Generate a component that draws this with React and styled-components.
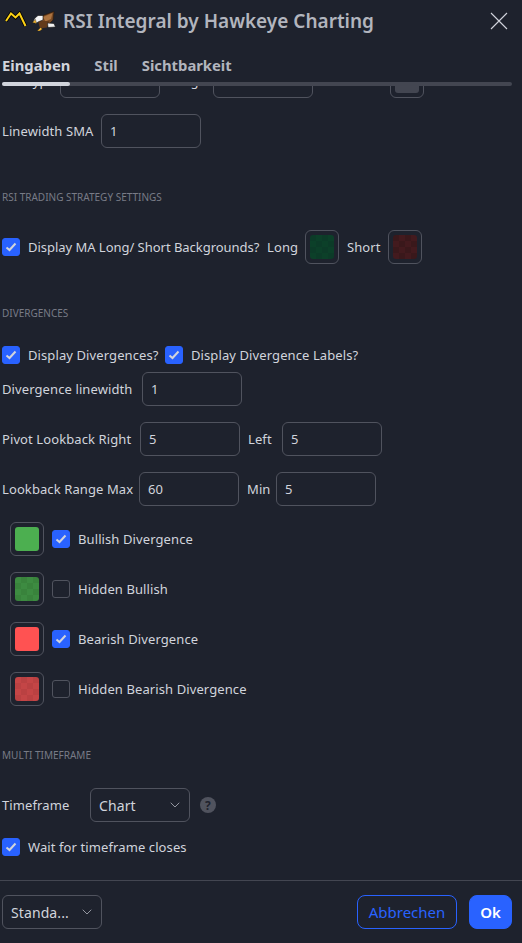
import React from 'react'
import styled, { createGlobalStyle } from 'styled-components'
import { ChevronDown } from 'lucide-react'

const GlobalStyle = createGlobalStyle`
  html, body {
    margin: 0;
    background: #1e222d;
  }
  * {
    box-sizing: border-box;
  }
`

const Dialog = styled.div`
  width: 522px;
  height: 943px;
  display: flex;
  flex-direction: column;
  background: #1e222d;
  color: #d1d4dc;
  font-family: 'Noto Sans', sans-serif;
  font-size: 13px;
  letter-spacing: 0.1px;
  overflow: hidden;
`

const Header = styled.header`
  height: 41px;
  flex: none;
  display: flex;
  align-items: center;
  padding: 0 14px 0 5px;
  gap: 5px;
`

const Title = styled.h1`
  margin: 0 0 0 2px;
  flex: 1;
  font-size: 19px;
  font-weight: 600;
  letter-spacing: 0;
  color: #b2b5be;
  white-space: nowrap;
`

const CloseButton = styled.button`
  display: flex;
  padding: 0;
  border: 0;
  background: none;
  color: #d1d4dc;
`

const Tabs = styled.nav`
  position: relative;
  height: 45px;
  flex: none;
  display: flex;
  gap: 24px;
  padding: 14px 2px 0;
  font-size: 14.8px;
  font-weight: 700;
  letter-spacing: 0;

  &::after {
    content: '';
    position: absolute;
    left: 2px;
    right: 10px;
    bottom: 0;
    height: 4px;
    border-radius: 2px;
    background: #434651;
  }
`

const Tab = styled.span`
  position: relative;
  z-index: 1;
  height: 31px;
  color: ${p => (p.$active ? '#d1d4dc' : '#b2b5be')};

  &::after {
    content: '';
    display: ${p => (p.$active ? 'block' : 'none')};
    position: absolute;
    left: 0;
    right: 0;
    bottom: 0;
    height: 4px;
    border-radius: 2px;
    background: #d1d4dc;
  }
`

const Body = styled.main`
  flex: 1;
  min-height: 0;
  overflow: hidden;
  padding: 0 2px;
`

// the list is scrolled: its first row sits mostly under the tabs
const Scrolled = styled.div`
  margin-top: -22px;
`

const Row = styled.div`
  height: 34px;
  display: flex;
  align-items: center;
  gap: ${p => p.$gap ?? 8}px;
  margin-top: ${p => p.$top ?? 16}px;
  white-space: nowrap;
`

const Label = styled.span`
  flex: none;
  width: ${p => p.$width}px;
  letter-spacing: ${p => (p.$tight ? '-0.03px' : 'inherit')};
`

const SectionTitle = styled.h2`
  margin: ${p => p.$top}px 0 0;
  height: 16px;
  font-size: 10px;
  line-height: 16px;
  font-weight: 400;
  letter-spacing: 0;
  color: #787b86;
  text-transform: uppercase;
`

const NumberBox = styled.div`
  width: 100px;
  height: 34px;
  flex: none;
  display: flex;
  align-items: center;
  padding: 0 8px;
  border: 1px solid #50535e;
  border-radius: 6px;
`

const SelectBox = styled(NumberBox)`
  justify-content: space-between;
  padding: 0 6px 0 8px;
  font-size: 14px;
`

const Swatch = styled.div`
  width: 34px;
  height: 34px;
  flex: none;
  display: flex;
  align-items: center;
  justify-content: center;
  border: 1px solid #50535e;
  border-radius: 6px;
  margin-left: ${p => p.$left ?? 0}px;
`

const Fill = styled.div`
  width: 24px;
  height: 24px;
  border-radius: 3px;
  background-color: ${p => p.$color};
  ${p =>
    p.$check &&
    `
    background-image: conic-gradient(${p.$check} 25%, transparent 0 50%, ${p.$check} 0 75%, transparent 0);
    background-size: 12px 12px;
  `}
`

const Box = styled.span`
  width: 18px;
  height: 18px;
  flex: none;
  display: flex;
  align-items: center;
  justify-content: center;
  border-radius: 3px;
  border: 1px solid ${p => (p.$checked ? '#2962ff' : '#50535e')};
  background: ${p => (p.$checked ? '#2962ff' : 'transparent')};
`

const CheckLabel = styled.span`
  display: inline-flex;
  align-items: center;
  gap: 8px;
`

const ColorRow = styled(Row)`
  padding-left: 8px;
`

const Hint = styled.span`
  width: 16px;
  height: 16px;
  display: flex;
  align-items: center;
  justify-content: center;
  border-radius: 50%;
  background: #50535e;
  color: #1e222d;
  font-size: 12px;
  font-weight: 700;
`

const Footer = styled.footer`
  height: 63px;
  flex: none;
  display: flex;
  align-items: center;
  justify-content: space-between;
  padding: 0 10px 0 2px;
  border-top: 1px solid #434651;
`

const Actions = styled.div`
  display: flex;
  gap: 12px;
`

const Button = styled.button`
  width: ${p => (p.$primary ? 43 : 100)}px;
  height: 34px;
  padding: 0;
  border: 1px solid #2962ff;
  border-radius: 8px;
  background: ${p => (p.$primary ? '#2962ff' : 'transparent')};
  color: ${p => (p.$primary ? '#ffffff' : '#2962ff')};
  font-family: inherit;
  font-size: 15px;
  font-weight: ${p => (p.$primary ? 600 : 400)};
`

const Check = () => (
  <svg width="12" height="10" viewBox="0 0 12 10" fill="none">
    <path d="M1.5 5.5 L4.5 8 L10.5 1.5" stroke="#d1d4dc" strokeWidth="2" />
  </svg>
)

const Checkbox = ({ checked, width, tight, children }) => (
  <CheckLabel>
    <Box $checked={checked}>{checked && <Check />}</Box>
    <Label $width={width} $tight={tight}>{children}</Label>
  </CheckLabel>
)

const Chevron = () => <ChevronDown size={16} strokeWidth={1.2} color="#b2b5be" />

const CloseIcon = () => (
  <svg width="18" height="18" viewBox="0 0 18 18" fill="none" stroke="currentColor" strokeWidth="1.1">
    <path d="M1 1 L17 17 M17 1 L1 17" />
  </svg>
)

const mountainLine = 'M1 10 L6 2.5 L10.5 6.5 L14.5 2.5 L20.5 15'

const MountainIcon = () => (
  <svg width="22" height="20" viewBox="0 0 22 20">
    <path d={mountainLine} fill="none" stroke="#000" strokeWidth="3.6" />
    <path d={mountainLine} fill="none" stroke="#fcd116" strokeWidth="2" />
  </svg>
)

const EagleIcon = () => (
  <svg width="24" height="20" viewBox="0 0 24 20">
    <path d="M7 6 L22 0.5 L21 9 L15 15 L9 13 Z" fill="#7a4b24" stroke="#2b1708" strokeWidth="0.6" />
    <path d="M11 6 L20.5 2 L19 8 L13.5 10.5 Z" fill="#ad7440" />
    <path d="M6 10 L17 10 L15 16.5 L8 17.5 Z" fill="#633b1b" />
    <path d="M1 10.5 L3 7 L6 4.5 L11 4.5 L11 9 L7 10.5 L3.5 12.5 Z" fill="#f6f6f6" stroke="#111" strokeWidth="0.6" />
    <path d="M0.3 11.5 L3.5 8.5 L4.5 12.5 Z" fill="#f2b632" stroke="#111" strokeWidth="0.4" />
    <path d="M15.5 12 L22 12.5 L23.5 16 L16 16.5 Z" fill="#f0f0f0" stroke="#111" strokeWidth="0.6" />
    <path d="M5 20 L8.5 16.5 L10.5 18 L8 20 Z" fill="#f2b632" stroke="#111" strokeWidth="0.4" />
  </svg>
)

const colorRows = [
  { label: 'Bullish Divergence', color: '#4caf50', checked: true },
  { label: 'Hidden Bullish', color: '#3d8b41', check: '#39833c' },
  { label: 'Bearish Divergence', color: '#ff5252', checked: true },
  { label: 'Hidden Bearish Divergence', color: '#c44546', check: '#ba4142' },
]

const App = () => (
  <Dialog>
    <GlobalStyle />
    <Header>
      <MountainIcon />
      <EagleIcon />
      <Title>RSI Integral by Hawkeye Charting</Title>
      <CloseButton>
        <CloseIcon />
      </CloseButton>
    </Header>

    <Tabs>
      <Tab $active>Eingaben</Tab>
      <Tab>Stil</Tab>
      <Tab>Sichtbarkeit</Tab>
    </Tabs>

    <Body>
      <Scrolled>
        <Row $top={0}>
          <Label $width={50}>MA Typ</Label>
          <NumberBox />
          <Label $width={37}>Length</Label>
          <NumberBox />
          <Swatch $left={69}>
            <Fill $color="#434651" />
          </Swatch>
        </Row>
        <Row>
          <Label $width={91}>Linewidth SMA</Label>
          <NumberBox>1</NumberBox>
        </Row>

        <SectionTitle $top={41}>RSI Trading Strategy Settings</SectionTitle>
        <Row $top={25}>
          <Checkbox checked width={231} tight>Display MA Long/ Short Backgrounds?</Checkbox>
          <Label $width={30}>Long</Label>
          <Swatch>
            <Fill $color="#0c3b28" $check="#0c4029" />
          </Swatch>
          <Label $width={33}>Short</Label>
          <Swatch>
            <Fill $color="#3a181b" $check="#431a1e" />
          </Swatch>
        </Row>

        <SectionTitle $top={41}>Divergences</SectionTitle>
        <Row $top={17}>
          <Checkbox checked width={129}>Display Divergences?</Checkbox>
          <Checkbox checked>Display Divergence Labels?</Checkbox>
        </Row>
        <Row $top={0}>
          <Label $width={132}>Divergence linewidth</Label>
          <NumberBox>1</NumberBox>
        </Row>
        <Row>
          <Label $width={130}>Pivot Lookback Right</Label>
          <NumberBox>5</NumberBox>
          <Label $width={26}>Left</Label>
          <NumberBox>5</NumberBox>
        </Row>
        <Row>
          <Label $width={129}>Lookback Range Max</Label>
          <NumberBox>60</NumberBox>
          <Label $width={21}>Min</Label>
          <NumberBox>5</NumberBox>
        </Row>

        {colorRows.map(row => (
          <ColorRow key={row.label}>
            <Swatch>
              <Fill $color={row.color} $check={row.check} />
            </Swatch>
            <Checkbox checked={row.checked}>{row.label}</Checkbox>
          </ColorRow>
        ))}

        <SectionTitle $top={41}>Multi Timeframe</SectionTitle>
        <Row $top={25} $gap={10}>
          <Label $width={78}>Timeframe</Label>
          <SelectBox>
            Chart
            <Chevron />
          </SelectBox>
          <Hint>?</Hint>
        </Row>
        <Row $top={8}>
          <Checkbox checked>Wait for timeframe closes</Checkbox>
        </Row>
      </Scrolled>
    </Body>

    <Footer>
      <SelectBox>
        Standa...
        <Chevron />
      </SelectBox>
      <Actions>
        <Button>Abbrechen</Button>
        <Button $primary>Ok</Button>
      </Actions>
    </Footer>
  </Dialog>
)

export default App
